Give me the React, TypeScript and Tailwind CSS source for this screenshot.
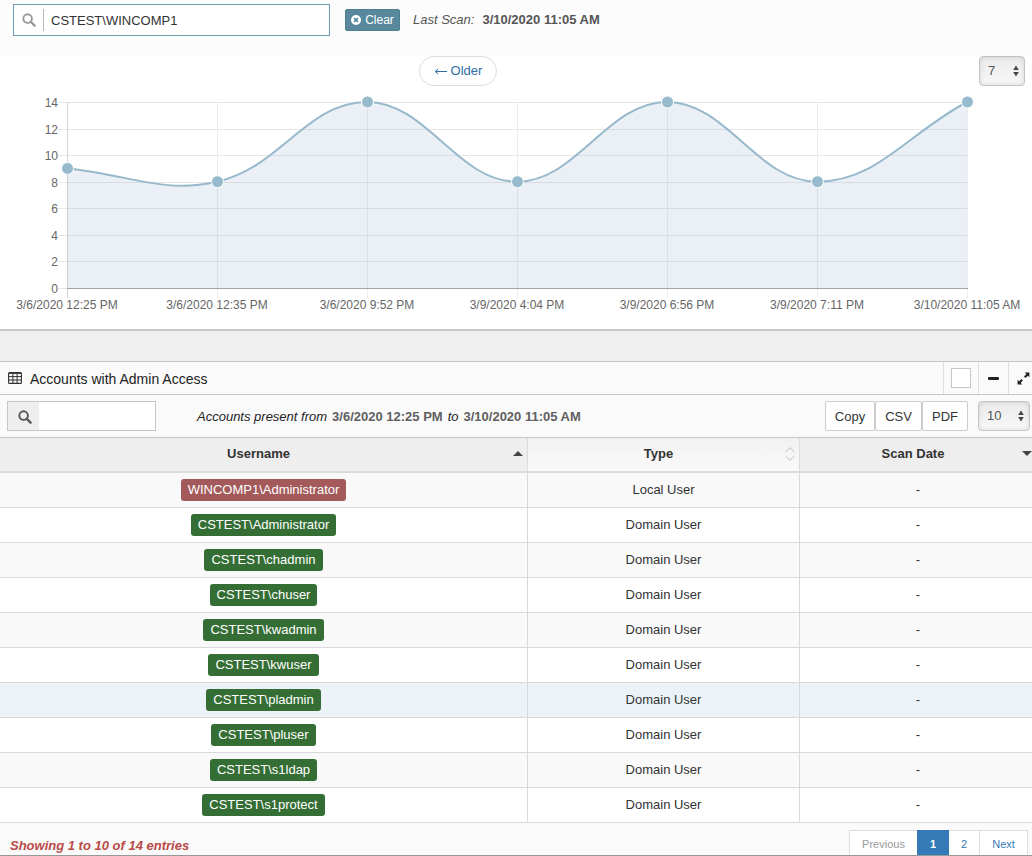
import { useMemo, useState } from "react";
import type { ReactNode } from "react";
import { clsx } from "clsx";

type Account = {
  name: string;
  type: "Local User" | "Domain User";
};

const ACCOUNTS: Account[] = [
  { name: "WINCOMP1\\Administrator", type: "Local User" },
  { name: "CSTEST\\Administrator", type: "Domain User" },
  { name: "CSTEST\\chadmin", type: "Domain User" },
  { name: "CSTEST\\chuser", type: "Domain User" },
  { name: "CSTEST\\kwadmin", type: "Domain User" },
  { name: "CSTEST\\kwuser", type: "Domain User" },
  { name: "CSTEST\\pladmin", type: "Domain User" },
  { name: "CSTEST\\pluser", type: "Domain User" },
  { name: "CSTEST\\s1ldap", type: "Domain User" },
  { name: "CSTEST\\s1protect", type: "Domain User" },
];

const SCANS = [
  { label: "3/6/2020 12:25 PM", count: 9 },
  { label: "3/6/2020 12:35 PM", count: 8 },
  { label: "3/6/2020 9:52 PM", count: 14 },
  { label: "3/9/2020 4:04 PM", count: 8 },
  { label: "3/9/2020 6:56 PM", count: 14 },
  { label: "3/9/2020 7:11 PM", count: 8 },
  { label: "3/10/2020 11:05 AM", count: 14 },
];

const TICKS = [0, 2, 4, 6, 8, 10, 12, 14];
const LEFT = 67;
const RIGHT = 967;
const TOP = 16;
const BOTTOM = 202;

type Point = { x: number; y: number };

function toY(v: number) {
  return BOTTOM - (v / 14) * (BOTTOM - TOP);
}

function clampY(y: number) {
  return Math.min(BOTTOM, Math.max(TOP, y));
}

// Smooth line through all points, tension 0.4
function splinePath(points: Point[]) {
  const cps = points.map((cur, i) => {
    const prev = points[i - 1] ?? cur;
    const next = points[i + 1] ?? cur;
    const d01 = Math.hypot(cur.x - prev.x, cur.y - prev.y);
    const d12 = Math.hypot(next.x - cur.x, next.y - cur.y);
    const fa = (0.4 * d01) / (d01 + d12);
    const fb = (0.4 * d12) / (d01 + d12);
    const dx = next.x - prev.x;
    const dy = next.y - prev.y;
    return {
      before: { x: cur.x - fa * dx, y: clampY(cur.y - fa * dy) },
      after: { x: cur.x + fb * dx, y: clampY(cur.y + fb * dy) },
    };
  });

  return points
    .map((p, i) => {
      if (i === 0) return `M${p.x},${p.y}`;
      const a = cps[i - 1].after;
      const b = cps[i].before;
      return `C${a.x},${a.y} ${b.x},${b.y} ${p.x},${p.y}`;
    })
    .join(" ");
}

function ScanChart() {
  const points = useMemo(
    () =>
      SCANS.map((s, i) => ({
        x: LEFT + (i * (RIGHT - LEFT)) / (SCANS.length - 1),
        y: toY(s.count),
      })),
    [],
  );
  const line = splinePath(points);

  return (
    <svg
      viewBox="0 0 1032 243"
      className="block w-full"
      role="img"
      aria-label="Admin accounts per scan"
    >
      {TICKS.map((t) => {
        const y = Math.round(toY(t)) + 0.5;
        return (
          <g key={t}>
            <line x1={58} x2={968} y1={y} y2={y} stroke="#e6e6e6" />
            <text
              x={58}
              y={y + 4}
              textAnchor="end"
              fontSize={12}
              fill="#666"
            >
              {t}
            </text>
          </g>
        );
      })}
      {points.map((p, i) => (
        <line
          key={p.x}
          x1={p.x + 0.5}
          x2={p.x + 0.5}
          y1={TOP}
          y2={BOTTOM + 10}
          stroke={i === 0 ? "#d4d4d4" : "#ececec"}
        />
      ))}
      <path
        d={`${line} L${RIGHT},${BOTTOM} L${LEFT},${BOTTOM} Z`}
        fill="#96b4d0"
        fillOpacity={0.2}
      />
      <line
        x1={LEFT}
        x2={968}
        y1={BOTTOM + 0.5}
        y2={BOTTOM + 0.5}
        stroke="#a3a6a9"
      />
      <path d={line} fill="none" stroke="#97b9cb" strokeWidth={2} />
      {points.map((p, i) => (
        <g key={p.x}>
          <circle cx={p.x + 0.5} cy={p.y} r={6} fill="#97bbcd" stroke="#fff" />
          <text
            x={p.x}
            y={223}
            textAnchor="middle"
            fontSize={12}
            fill="#666"
          >
            {SCANS[i].label}
          </text>
        </g>
      ))}
    </svg>
  );
}

function SearchIcon({ className }: { className?: string }) {
  return (
    <svg viewBox="0 0 14 14" className={className} aria-hidden="true">
      <circle
        cx="5.6"
        cy="5.6"
        r="4.3"
        fill="none"
        stroke="currentColor"
        strokeWidth="1.9"
      />
      <path
        d="M9 9L12.6 12.6"
        stroke="currentColor"
        strokeWidth="2.4"
        strokeLinecap="round"
      />
    </svg>
  );
}

function TableIcon() {
  return (
    <svg viewBox="0 0 14 12" className="h-3 w-3.5" aria-hidden="true">
      <rect
        x="0.6"
        y="0.6"
        width="12.8"
        height="10.8"
        rx="1"
        fill="none"
        stroke="#333"
        strokeWidth="1.1"
      />
      <path
        d="M0.5 1.4H13.5M0.5 4.6H13.5M0.5 8H13.5M4.9 2V11.5M9.1 2V11.5"
        stroke="#333"
        strokeWidth="1"
      />
    </svg>
  );
}

function ExpandIcon() {
  return (
    <svg viewBox="0 0 13 13" className="size-[13px]" aria-hidden="true">
      <path
        d="M7.8 0.6H12.4V5.2L10.8 3.7L8.5 6L7 4.5L9.3 2.2ZM0.6 7.8V12.4H5.2L3.7 10.8L5.9 8.6L4.4 7.1L2.2 9.3Z"
        fill="#222"
      />
    </svg>
  );
}

function CountSelect({
  label,
  value,
  onChange,
  options,
  className,
}: {
  label: string;
  value: string;
  onChange: (v: string) => void;
  options: string[];
  className?: string;
}) {
  return (
    <div className={clsx("relative h-[30px]", className)}>
      <select
        aria-label={label}
        value={value}
        onChange={(e) => onChange(e.target.value)}
        className="h-full w-full appearance-none rounded border border-[#c4c4c4] bg-linear-to-b from-[#ebebeb] to-[#f8f8f8] pl-2 text-[13px] text-[#555] shadow-[inset_0_0_5px_rgba(0,0,0,0.12)]"
      >
        {options.map((o) => (
          <option key={o}>{o}</option>
        ))}
      </select>
      <svg
        viewBox="0 0 6 12"
        className="pointer-events-none absolute top-[9px] right-[6px] h-3 w-1.5"
        aria-hidden="true"
      >
        <path d="M3 0.5L5.8 5H0.2ZM3 11.5L5.8 7H0.2Z" fill="#444" />
      </svg>
    </div>
  );
}

function HeadCell({
  children,
  sorted,
  icon,
}: {
  children: ReactNode;
  sorted?: boolean;
  icon: ReactNode;
}) {
  return (
    <th
      scope="col"
      className={clsx(
        "h-[35px] border-r border-b-2 border-[#dcdcdc] p-0 font-bold",
        sorted ? "bg-[#eeeeee]" : "bg-linear-to-b from-[#f1f1f1] to-[#fafafa]",
      )}
    >
      <div className="flex items-center pr-1 pb-0.5 pl-1">
        <span className="flex-1">{children}</span>
        {icon}
      </div>
    </th>
  );
}

function Badge({ name, local }: { name: string; local: boolean }) {
  return (
    <span
      className={clsx(
        "inline-block h-[22px] rounded-[3px] px-[7px] leading-[21px] text-white",
        local ? "bg-[#a45a5a]" : "bg-[#356e35]",
      )}
    >
      {name}
    </span>
  );
}

export default function App() {
  const [computer, setComputer] = useState("CSTEST\\WINCOMP1");
  const [scanCount, setScanCount] = useState("7");
  const [filter, setFilter] = useState("");
  const [pageSize, setPageSize] = useState("10");

  const rows = ACCOUNTS.filter((a) =>
    a.name.toLowerCase().includes(filter.toLowerCase()),
  );

  return (
    <div className="overflow-hidden bg-[#efefef] font-['Liberation_Sans',Arial,sans-serif] text-[13px] leading-5 text-[#333]">
      <section className="border-b-2 border-[#c9c9c9] bg-white">
        <div className="flex h-14 items-start bg-[#fcfcfc] pt-1 pl-[13px]">
          <label
            htmlFor="computer"
            className="flex h-8 w-[317px] items-center border border-[#6c9ab4] bg-white pl-2"
          >
            <SearchIcon className="size-3.5 text-[#999]" />
            <input
              id="computer"
              aria-label="Computer"
              value={computer}
              onChange={(e) => setComputer(e.target.value)}
              className="ml-[7px] h-[22px] min-w-0 flex-1 border-l border-[#bbb] pl-[7px] outline-none"
            />
          </label>
          <div className="flex h-8 items-center">
            <button
              type="button"
              onClick={() => setComputer("")}
              className="ml-[15px] flex h-[22px] w-[55px] items-center justify-center gap-1 rounded-[2px] border border-[#4d7e92] bg-[#57889c] text-xs text-white"
            >
              <svg viewBox="0 0 10 10" className="size-2.5" aria-hidden="true">
                <circle cx="5" cy="5" r="5" fill="#fff" />
                <path
                  d="M3.1 3.1L6.9 6.9M6.9 3.1L3.1 6.9"
                  stroke="#57889c"
                  strokeWidth="1.7"
                />
              </svg>
              Clear
            </button>
            <span className="ml-[13px] text-[#555] italic">Last Scan:</span>
            <b className="ml-2 text-[#555]">3/10/2020 11:05 AM</b>
          </div>
        </div>

        <div className="flex items-center justify-between pr-[7px] pl-[40.6%]">
          <a
            href="#older"
            className="flex h-[30px] w-[78px] items-center justify-center gap-1 rounded-full border border-[#ddd] bg-white text-[#2f6ea5]"
          >
            <svg viewBox="0 0 13 8" className="h-2 w-[13px]" aria-hidden="true">
              <path
                d="M13 4.5H2M4.2 2L1.2 4.5L4.2 7"
                fill="none"
                stroke="currentColor"
                strokeWidth="1"
              />
            </svg>
            Older
          </a>
          <CountSelect
            label="Scans shown"
            value={scanCount}
            onChange={setScanCount}
            options={["7", "14", "30"]}
            className="w-[46px]"
          />
        </div>
        <ScanChart />
      </section>

      <section className="mt-[30px] border-t border-[#c6c6c6] bg-[#fafafa]">
        <header className="flex h-[33px] items-stretch border-b border-[#c6c6c6] pl-2">
          <h2 className="flex flex-1 items-center gap-2 text-sm text-[#222]">
            <TableIcon />
            <span className="pt-0.5">Accounts with Admin Access</span>
          </h2>
          <div className="flex w-[35px] items-center justify-center border-l border-[#e0e0e0]">
            <input
              type="checkbox"
              aria-label="Highlight panel"
              className="size-5 appearance-none border border-[#c6c6c6] bg-white"
            />
          </div>
          <button
            type="button"
            aria-label="Collapse"
            className="flex w-[30px] items-center justify-center border-l border-[#e0e0e0]"
          >
            <span className="h-[3px] w-[11px] rounded-[1px] bg-[#222]" />
          </button>
          <button
            type="button"
            aria-label="Expand"
            className="flex w-6 items-center justify-end border-l border-[#e0e0e0] pr-[2px]"
          >
            <ExpandIcon />
          </button>
        </header>

        <div className="flex h-[43px] items-center border-b border-[#c6c6c6] pr-[2px] pl-[7px]">
          <label
            htmlFor="filter"
            className="flex h-[30px] w-[149px] border border-[#c6c6c6] bg-white"
          >
            <span className="flex w-[31px] items-center justify-center bg-[#eeeeee] pt-0.5 pl-[3px]">
              <SearchIcon className="size-3.5 text-[#555]" />
            </span>
            <input
              id="filter"
              aria-label="Filter accounts"
              value={filter}
              onChange={(e) => setFilter(e.target.value)}
              className="min-w-0 flex-1 px-2 outline-none"
            />
          </label>
          <p className="ml-[41px] flex flex-1 gap-[5px] pt-0.5 whitespace-nowrap text-[#222]">
            <i>Accounts present from</i>
            <b className="text-[#5f5f5f]">3/6/2020 12:25 PM</b>
            <i>to</i>
            <b className="text-[#5f5f5f]">3/10/2020 11:05 AM</b>
          </p>
          <div className="flex *:h-[30px] *:rounded-[2px] *:border *:border-[#ccc] *:bg-white *:pt-0.5">
            <button type="button" className="w-[50px]">
              Copy
            </button>
            <button type="button" className="w-[47px]">
              CSV
            </button>
            <button type="button" className="w-[46px]">
              PDF
            </button>
          </div>
          <CountSelect
            label="Rows per page"
            value={pageSize}
            onChange={setPageSize}
            options={["10", "25", "50"]}
            className="ml-2.5 w-[52px]"
          />
        </div>

        {/* the last column runs a little past the edge of the panel */}
        <table className="w-[calc(100%+5px)] table-fixed border-separate border-spacing-0 text-center">
          <colgroup>
            <col />
            <col className="w-[272px]" />
            <col className="w-[237px]" />
          </colgroup>
          <thead>
            <tr>
              <HeadCell
                sorted
                icon={
                  <svg viewBox="0 0 10 5" className="h-[5px] w-2.5">
                    <path d="M0 5L5 0L10 5Z" fill="#444" />
                  </svg>
                }
              >
                Username
              </HeadCell>
              <HeadCell
                icon={
                  <svg viewBox="0 0 10 14" className="h-3.5 w-2.5">
                    <path
                      d="M0.5 5L5 0.7L9.5 5M0.5 9L5 13.3L9.5 9"
                      fill="none"
                      stroke="#bbb"
                    />
                  </svg>
                }
              >
                Type
              </HeadCell>
              <HeadCell
                sorted
                icon={
                  <svg viewBox="0 0 10 5" className="h-[5px] w-2.5">
                    <path d="M0 0L5 5L10 0Z" fill="#444" />
                  </svg>
                }
              >
                Scan Date
              </HeadCell>
            </tr>
          </thead>
          <tbody>
            {rows.map((r) => (
              <tr
                key={r.name}
                className={clsx(
                  "*:h-[35px] *:border-r *:border-b *:border-[#d9d9d9] *:p-0",
                  r.name === "CSTEST\\pladmin"
                    ? "bg-[#ecf3f8]"
                    : "odd:bg-[#f9f9f9] even:bg-white",
                )}
              >
                <td>
                  <Badge name={r.name} local={r.type === "Local User"} />
                </td>
                <td>{r.type}</td>
                <td>-</td>
              </tr>
            ))}
          </tbody>
        </table>

        <footer className="flex h-[33px] items-start justify-between overflow-hidden border-b border-[#999] pt-[7px] pr-1 pl-2.5">
          <p className="pt-1.5 font-bold text-[#b94a48] italic">
            Showing 1 to 10 of 14 entries
          </p>
          <nav
            aria-label="Pages"
            className="flex text-[11px] text-[#337ab7] *:flex *:h-7 *:items-center *:justify-center *:border-[#ddd]"
          >
            <span className="w-[68px] border-y border-l bg-white text-[#999]">
              Previous
            </span>
            <a
              href="#1"
              aria-current="page"
              className="w-8 bg-[#337ab7] font-bold text-white"
            >
              1
            </a>
            <a href="#2" className="w-[31px] border-y border-r bg-white">
              2
            </a>
            <a href="#next" className="w-12 border-y border-r bg-white">
              Next
            </a>
          </nav>
        </footer>
      </section>
    </div>
  );
}
